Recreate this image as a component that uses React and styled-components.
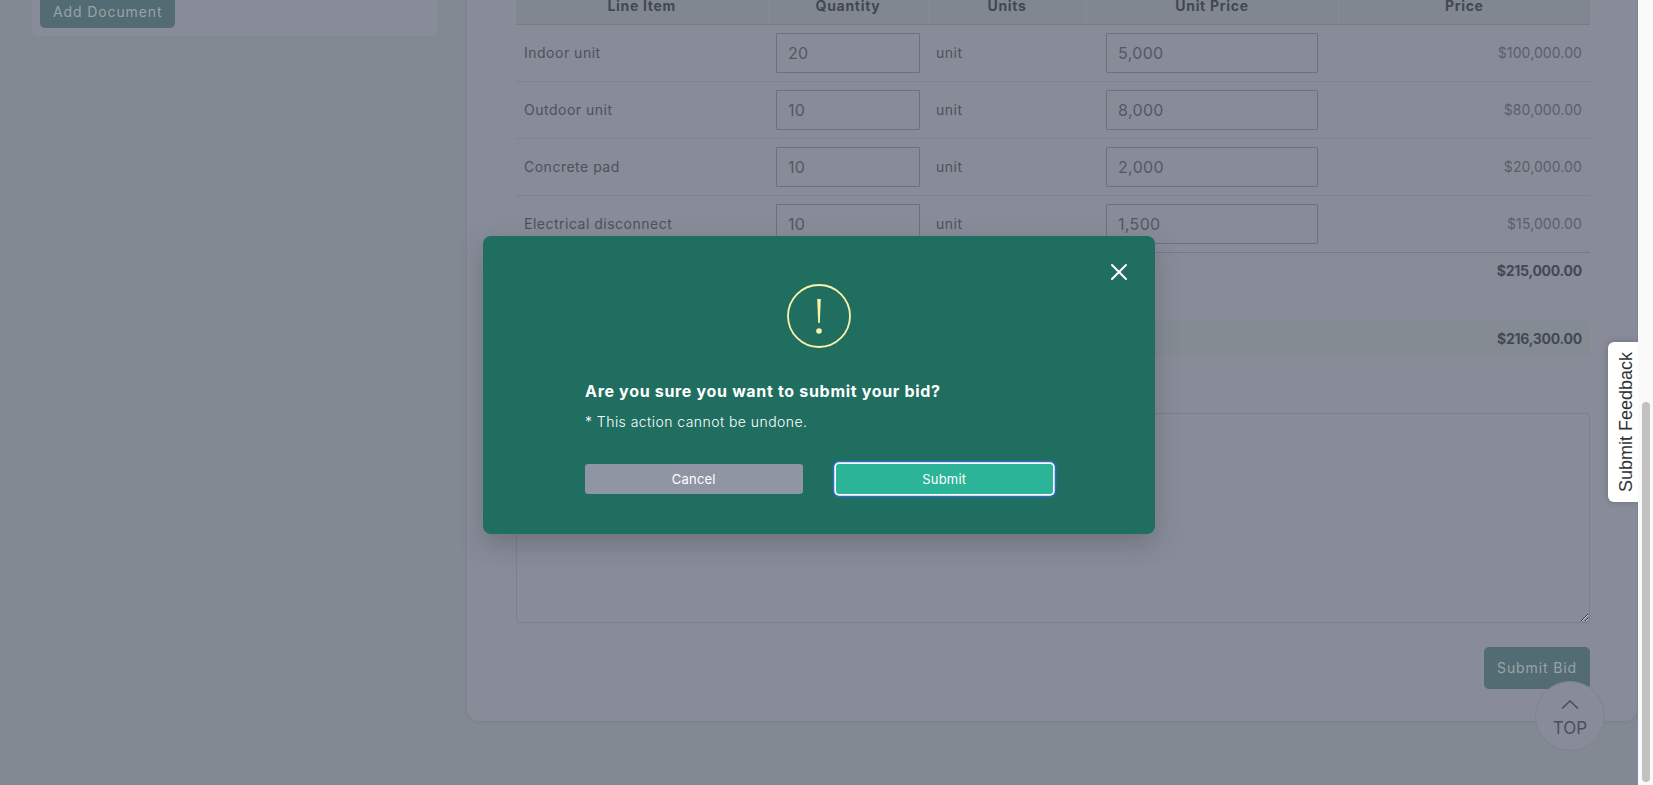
import React from "react";
import styled, { createGlobalStyle } from "styled-components";
import { X } from "lucide-react";

const LINE_ITEMS = [
  { name: "Indoor unit", qty: "20", unitPrice: "5,000", price: "$100,000.00" },
  { name: "Outdoor unit", qty: "10", unitPrice: "8,000", price: "$80,000.00" },
  { name: "Concrete pad", qty: "10", unitPrice: "2,000", price: "$20,000.00" },
  { name: "Electrical disconnect", qty: "10", unitPrice: "1,500", price: "$15,000.00" },
];

const App = () => {
  return (
    <Screen>
      <GlobalStyle />
      <Viewport>
        <Page>
          <SideCard>
            <DimButton>Add Document</DimButton>
          </SideCard>
          <MainCard>
            <BidTable>
              <colgroup>
                <col width="252" />
                <col width="160" />
                <col width="158" />
                <col width="252" />
                <col width="252" />
              </colgroup>
              <thead>
                <tr>
                  <HeadCell>Line Item</HeadCell>
                  <HeadCell>Quantity</HeadCell>
                  <HeadCell>Units</HeadCell>
                  <HeadCell>Unit Price</HeadCell>
                  <HeadCell>Price</HeadCell>
                </tr>
              </thead>
              <tbody>
                {LINE_ITEMS.map((item) => (
                  <ItemRow key={item.name}>
                    <Cell>{item.name}</Cell>
                    <Cell>
                      <NumberInput $width="144px" defaultValue={item.qty} />
                    </Cell>
                    <Cell>unit</Cell>
                    <Cell>
                      <NumberInput $width="212px" defaultValue={item.unitPrice} />
                    </Cell>
                    <PriceCell>{item.price}</PriceCell>
                  </ItemRow>
                ))}
              </tbody>
            </BidTable>
            <SubTotal>$215,000.00</SubTotal>
            <GrandTotal>$216,300.00</GrandTotal>
            <Notes />
            <Actions>
              <DimButton $tall>Submit Bid</DimButton>
            </Actions>
          </MainCard>
        </Page>

        <TopButton>
          <svg width="18" height="9" viewBox="0 0 18 9" fill="none">
            <polyline points="1,8.5 9,1 17,8.5" stroke="#4a4f5c" strokeWidth="1.6" />
          </svg>
          <span>TOP</span>
        </TopButton>

        <Backdrop>
          <Modal>
            <CloseButton>
              <X size={28} strokeWidth={1.7} color="#ffffff" />
            </CloseButton>
            <WarningIcon>
              <svg width="64" height="64" viewBox="0 0 64 64" fill="none">
                <circle cx="32" cy="32" r="31" stroke="#fbf3a9" strokeWidth="1.8" />
                <path d="M30.2 15h3.6l-1 24h-1.6z" fill="#fbf3a9" />
                <circle cx="32" cy="47" r="2.8" fill="#fbf3a9" />
              </svg>
            </WarningIcon>
            <ModalTitle>Are you sure you want to submit your bid?</ModalTitle>
            <ModalNote>* This action cannot be undone.</ModalNote>
            <ModalActions>
              <ModalButton>Cancel</ModalButton>
              <ModalButton $primary>Submit</ModalButton>
            </ModalActions>
          </Modal>
        </Backdrop>

        <FeedbackTab>Submit Feedback</FeedbackTab>
      </Viewport>
      <ScrollTrack>
        <ScrollThumb />
      </ScrollTrack>
    </Screen>
  );
};

export default App;

const GlobalStyle = createGlobalStyle`
  html, body {
    margin: 0;
    height: 100%;
    overflow: hidden;
    font-family: Inter, "Noto Sans", sans-serif;
  }
`;

const Screen = styled.div`
  display: flex;
  height: 100vh;
`;

const Viewport = styled.div`
  position: relative;
  flex: 1;
  overflow: hidden;
  background: #838993;
`;

const Page = styled.div`
  display: flex;
  align-items: flex-start;
  gap: 30px;
  margin-top: -13px;
  padding: 0 1px 0 32px;
`;

const SideCard = styled.div`
  width: 405px;
  padding: 9px 8px 8px;
  box-sizing: border-box;
  background: #888c98;
  border-radius: 0 0 6px 6px;
`;

const MainCard = styled.div`
  flex: 1;
  padding: 0 47px 32px 49px;
  background: #888c98;
  border-radius: 0 0 12px 12px;
  box-shadow: 0 1px 4px rgba(60, 65, 75, 0.12);
`;

const DimButton = styled.button`
  display: block;
  height: ${({ $tall }) => ($tall ? "42px" : "32px")};
  padding: 0 13px 2px;
  font-family: inherit;
  font-size: 14px;
  letter-spacing: 0.88px;
  color: #9aa3a8;
  background: #536b72;
  border: none;
  border-radius: 5px;
`;

const BidTable = styled.table`
  width: 100%;
  table-layout: fixed;
  border-collapse: collapse;
  font-size: 14px;
  color: #4c515d;
`;

const HeadCell = styled.th`
  height: 37px;
  padding: 0 8px;
  font-size: 14px;
  font-weight: 700;
  letter-spacing: 0.7px;
  color: #424753;
  background: #808791;
  border-bottom: 1px solid #777d88;
  border-left: 1px solid #858b95;
  &:first-child {
    border-left: none;
  }
`;

const ItemRow = styled.tr`
  border-bottom: 1px solid #7f838f;
  &:last-child {
    border-bottom-color: #747985;
  }
`;

const Cell = styled.td`
  height: 54px;
  padding: 0 8px 2px;
  letter-spacing: 0.5px;
`;

const PriceCell = styled(Cell)`
  text-align: right;
  color: #5a5f6b;
  letter-spacing: 0.1px;
`;

const NumberInput = styled.input`
  display: block;
  box-sizing: border-box;
  position: relative;
  top: 1px;
  width: ${({ $width }) => $width};
  height: 40px;
  margin: 0 auto;
  padding: 0 11px;
  font-family: inherit;
  font-size: 16px;
  letter-spacing: 0.35px;
  color: #535864;
  background: transparent;
  border: 1px solid #6c717d;
  border-radius: 1px;
  outline: none;
`;

const SubTotal = styled.div`
  height: 68px;
  box-sizing: border-box;
  padding: 9px 8px 0;
  line-height: 18px;
  font-size: 14px;
  font-weight: 700;
  letter-spacing: -0.25px;
  text-align: right;
  color: #434854;
`;

const GrandTotal = styled.div`
  height: 35px;
  padding: 0 8px;
  line-height: 35px;
  font-size: 14px;
  font-weight: 700;
  letter-spacing: -0.25px;
  text-align: right;
  color: #434854;
  background: #858b93;
`;

const Notes = styled.textarea`
  display: block;
  box-sizing: border-box;
  width: 100%;
  height: 210px;
  margin-top: 57px;
  background: transparent;
  border: 1px solid #7b808c;
  border-radius: 4px;
  outline: none;
`;

const Actions = styled.div`
  display: flex;
  justify-content: flex-end;
  margin-top: 24px;
`;

const TopButton = styled.div`
  position: absolute;
  top: 681px;
  left: 1535px;
  width: 70px;
  height: 70px;
  box-sizing: border-box;
  display: flex;
  flex-direction: column;
  align-items: center;
  justify-content: center;
  gap: 10px;
  padding-top: 4px;
  font-size: 17px;
  line-height: 18px;
  color: #4a4f5c;
  background: #888c98;
  border: 1px solid #7f838f;
  border-radius: 50%;
`;

const Backdrop = styled.div`
  position: absolute;
  inset: 0;
  display: flex;
  align-items: flex-start;
  justify-content: center;
  padding-top: 236px;
`;

const Modal = styled.div`
  position: relative;
  width: 672px;
  height: 298px;
  box-sizing: border-box;
  padding: 48px 102px 40px 102px;
  color: #ffffff;
  background: #1f6e5f;
  border-radius: 8px;
  box-shadow: 0 10px 25px rgba(40, 45, 55, 0.25);
`;

const CloseButton = styled.div`
  position: absolute;
  top: 22px;
  right: 22px;
  display: flex;
`;

const WarningIcon = styled.div`
  display: flex;
  justify-content: center;
  margin-right: 1px;
`;

const ModalTitle = styled.div`
  margin-top: 31px;
  font-size: 16px;
  line-height: 24px;
  font-weight: 700;
  letter-spacing: 0.68px;
`;

const ModalNote = styled.div`
  margin-top: 9px;
  font-size: 14px;
  line-height: 20px;
  font-weight: 300;
  letter-spacing: 0.45px;
`;

const ModalActions = styled.div`
  display: flex;
  gap: 33px;
  margin-top: 32px;
`;

const ModalButton = styled.button`
  flex: 1;
  height: 30px;
  font-family: inherit;
  font-size: 13px;
  letter-spacing: 0.2px;
  color: #ffffff;
  background: ${({ $primary }) => ($primary ? "#2bb498" : "#8f95a3")};
  border: none;
  border-radius: 3px;
  box-shadow: ${({ $primary }) =>
    $primary ? "0 0 0 1.7px #ffffff, 0 0 0 3.4px #2a70b5" : "none"};
`;

const FeedbackTab = styled.div`
  position: absolute;
  top: 342px;
  right: 0;
  width: 30px;
  height: 160px;
  box-sizing: border-box;
  padding-right: 7px;
  display: flex;
  align-items: center;
  justify-content: center;
  writing-mode: vertical-rl;
  transform: rotate(180deg);
  font-family: "Liberation Sans", Arial, sans-serif;
  font-size: 18px;
  color: #333333;
  background: #ffffff;
  border-radius: 0 6px 6px 0;
  box-shadow: 0 0 6px rgba(40, 45, 55, 0.3);
`;

const ScrollTrack = styled.div`
  width: 15px;
  box-sizing: border-box;
  display: flex;
  flex-direction: column;
  justify-content: flex-end;
  align-items: center;
  padding-bottom: 3px;
  background: #fafafa;
`;

const ScrollThumb = styled.div`
  width: 8px;
  height: 380px;
  background: #c1c1c1;
  border-radius: 4px;
`;
